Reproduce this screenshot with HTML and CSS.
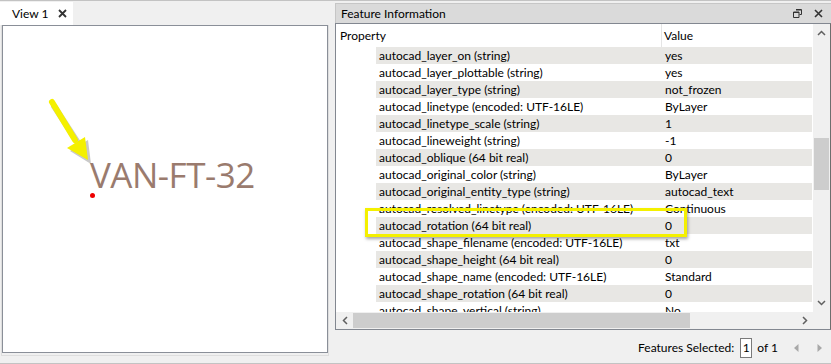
FILE: index.html
```html
<!DOCTYPE html>
<html>
<head>
<meta charset="utf-8">
<link rel="stylesheet" href="styles.css">
</head>
<body>
<div class="screen">
  <div class="app">
    <section class="left">
      <div class="tabs">
        <div class="tab"><span class="tab-label">View 1</span><svg class="tab-close" width="9" height="9" viewBox="0 0 9 9"><path d="M1 1L8 8M8 1L1 8" stroke="#333" stroke-width="1.8"/></svg></div>
      </div>
      <div class="canvas-outer">
        <div class="canvas">
          <span class="label">VAN-FT-32</span>
          <span class="dot"></span>
          <svg class="arrow" width="60" height="80" viewBox="0 0 60 80">
            <g transform="translate(2,2)" fill="#888" opacity="0.45">
              <path d="M10 8L34 45" stroke="#888" stroke-width="6" stroke-linecap="round"/>
              <polygon points="26,53 44,42 47,66"/>
            </g>
            <path d="M10 6L33 44" stroke="#f4f000" stroke-width="6" stroke-linecap="round"/>
            <polygon points="25,52 43,41 46,64" fill="#f4f000"/>
          </svg>
        </div>
      </div>
    </section>
    <section class="right">
      <div class="titlebar">
        <span class="title">Feature Information</span>
        <div class="title-icons">
          <svg width="9" height="9" viewBox="0 0 9 9"><path d="M3 0.5H8.5V5.5H6.5M0.5 3H6V8.5H0.5Z" fill="none" stroke="#333" stroke-width="1"/><path d="M3 1H8" stroke="#333" stroke-width="1"/><path d="M1 3.5H6" stroke="#333" stroke-width="1"/></svg>
          <svg width="9" height="9" viewBox="0 0 9 9"><path d="M1 1L8 8M8 1L1 8" stroke="#333" stroke-width="1.6"/></svg>
        </div>
      </div>
      <div class="tree">
        <div class="tree-main">
          <div class="viewport">
            <div class="header">
              <div class="h-prop">Property</div>
              <div class="h-val">Value</div>
            </div>
            <div class="rows">
              <div class="row alt"><span class="p">autocad_layer_on (string)</span><span class="v">yes</span></div>
              <div class="row"><span class="p">autocad_layer_plottable (string)</span><span class="v">yes</span></div>
              <div class="row alt"><span class="p">autocad_layer_type (string)</span><span class="v">not_frozen</span></div>
              <div class="row"><span class="p">autocad_linetype (encoded: UTF-16LE)</span><span class="v">ByLayer</span></div>
              <div class="row alt"><span class="p">autocad_linetype_scale (string)</span><span class="v">1</span></div>
              <div class="row"><span class="p">autocad_lineweight (string)</span><span class="v">-1</span></div>
              <div class="row alt"><span class="p">autocad_oblique (64 bit real)</span><span class="v">0</span></div>
              <div class="row"><span class="p">autocad_original_color (string)</span><span class="v">ByLayer</span></div>
              <div class="row alt"><span class="p">autocad_original_entity_type (string)</span><span class="v">autocad_text</span></div>
              <div class="row"><span class="p">autocad_resolved_linetype (encoded: UTF-16LE)</span><span class="v">Continuous</span></div>
              <div class="row alt"><span class="p">autocad_rotation (64 bit real)</span><span class="v">0</span></div>
              <div class="row"><span class="p">autocad_shape_filename (encoded: UTF-16LE)</span><span class="v">txt</span></div>
              <div class="row alt"><span class="p">autocad_shape_height (64 bit real)</span><span class="v">0</span></div>
              <div class="row"><span class="p">autocad_shape_name (encoded: UTF-16LE)</span><span class="v">Standard</span></div>
              <div class="row alt"><span class="p">autocad_shape_rotation (64 bit real)</span><span class="v">0</span></div>
              <div class="row"><span class="p">autocad_shape_vertical (string)</span><span class="v">No</span></div>
            </div>
          </div>
          <div class="vscroll">
            <svg class="sarrow" width="9" height="6" viewBox="0 0 9 6"><path d="M1 5L4.5 1.5L8 5" fill="none" stroke="#606060" stroke-width="1.5"/></svg>
            <div class="vtrack-top"></div>
            <div class="vthumb"></div>
            <div class="vtrack-bottom"></div>
            <svg class="sarrow" width="9" height="6" viewBox="0 0 9 6"><path d="M1 1L4.5 4.5L8 1" fill="none" stroke="#606060" stroke-width="1.5"/></svg>
          </div>
        </div>
        <div class="hscroll">
          <svg class="harrow" width="6" height="9" viewBox="0 0 6 9"><path d="M5 1L1.5 4.5L5 8" fill="none" stroke="#606060" stroke-width="1.5"/></svg>
          <div class="hthumb"></div>
          <div class="hrest"></div>
          <svg class="harrow" width="6" height="9" viewBox="0 0 6 9"><path d="M1 1L4.5 4.5L1 8" fill="none" stroke="#606060" stroke-width="1.5"/></svg>
          <div class="corner"></div>
        </div>
      </div>
      <div class="footer">
        <span class="f-label">Features Selected:</span>
        <span class="spin">1</span>
        <span class="f-of">of 1</span>
        <svg class="nav" width="5" height="8" viewBox="0 0 5 8"><polygon points="4.5,0 0,4 4.5,8" fill="#a8a8a8"/></svg>
        <svg class="nav" width="5" height="8" viewBox="0 0 5 8"><polygon points="0.5,0 5,4 0.5,8" fill="#a8a8a8"/></svg>
      </div>
    </section>
  </div>
  <div class="highlight"></div>
</div>
</body>
</html>
```

FILE: styles.css
```css
* { box-sizing: border-box; }
html, body { margin: 0; padding: 0; }
body {
  background: #f0f0f0;
  font-family: "Lato", "Open Sans", sans-serif;
  font-size: 12px;
  color: #000;
}
.screen {
  position: relative;
  width: 831px;
  height: 364px;
  border-top: 1px solid #c3c3c3;
  border-bottom: 1px solid #c3c3c3;
  overflow: hidden;
}
.app {
  display: flex;
  height: 362px;
}
.left {
  width: 330px;
  display: flex;
  flex-direction: column;
  padding-top: 1px;
}
.tabs {
  height: 23px;
  display: flex;
}
.tab {
  width: 73px;
  background: #fff;
  display: flex;
  align-items: center;
  padding-left: 12px;
  gap: 9px;
}
.tab-label { line-height: 1; }
.canvas-outer {
  margin-left: 1px;
  width: 328px;
  height: 331px;
  border: 1px solid #dedede;
  border-top: none;
  padding: 1px 0 0 0;
}
.canvas {
  position: relative;
  width: 326px;
  height: 328px;
  background: #fff;
  border: 1px solid #8a8f98;
  margin-top: -1px;
}
.label {
  position: absolute;
  left: 87px;
  top: 131px;
  font-family: "Open Sans", sans-serif;
  font-size: 35px;
  color: #9a7b6e;
  letter-spacing: -0.5px;
  line-height: 1;
}
.dot {
  position: absolute;
  left: 87px;
  top: 167px;
  width: 5px;
  height: 5px;
  border-radius: 50%;
  background: #ee0000;
}
.arrow {
  position: absolute;
  left: 39px;
  top: 70px;
}
.right {
  flex: 1;
  margin-left: 5px;
  display: flex;
  flex-direction: column;
  padding-top: 2px;
}
.titlebar {
  height: 20px;
  background: #dadada;
  border-top: 1px solid #c6c6c6;
  border-left: 1px solid #c6c6c6;
  display: flex;
  align-items: center;
  padding: 0 8px 0 5px;
}
.title { flex: 1; }
.title-icons {
  display: flex;
  gap: 12px;
  align-items: center;
}
.tree {
  height: 307px;
  border: 1px solid #828790;
  border-right: 1px solid #6e6e6e;
  display: flex;
  flex-direction: column;
  background: #fff;
}
.tree-main {
  flex: 1;
  display: flex;
  min-height: 0;
}
.viewport {
  flex: 1;
  overflow: hidden;
}
.header {
  height: 23px;
  display: flex;
  align-items: center;
}
.h-prop {
  width: 326px;
  padding-left: 4px;
  height: 100%;
  display: flex;
  align-items: center;
  border-right: 1px solid #e5e5e5;
}
.h-val { padding-left: 2px; }
.rows {
  padding-left: 40px;
  padding-right: 1px;
}
.row {
  height: 17px;
  display: flex;
  align-items: center;
  white-space: nowrap;
}
.row.alt { background: #e8e7e4; }
.p {
  width: 286px;
  padding-left: 3px;
  overflow: hidden;
}
.v { padding-left: 3px; }
.vscroll {
  width: 17px;
  background: #f0f0f0;
  display: flex;
  flex-direction: column;
  align-items: center;
}
.sarrow { margin: 6px 0; flex: none; }
.vtrack-top { height: 96px; }
.vthumb {
  width: 15px;
  height: 52px;
  background: #cdcdcd;
}
.vtrack-bottom { flex: 1; }
.hscroll {
  height: 17px;
  background: #f0f0f0;
  display: flex;
  align-items: center;
}
.harrow { margin: 0 5px 0 6px; flex: none; }
.hthumb {
  height: 15px;
  width: 337px;
  background: #cdcdcd;
}
.hrest { flex: 1; }
.corner { width: 17px; height: 17px; background: #f0f0f0; }
.footer {
  flex: 1;
  display: flex;
  align-items: center;
  justify-content: flex-end;
  padding-right: 9px;
  padding-top: 2px;
}
.f-label { margin-right: 6px; }
.spin {
  width: 12px;
  height: 20px;
  border: 1px solid #7a7a7a;
  background: #fff;
  display: flex;
  align-items: center;
  justify-content: center;
  margin-right: 5px;
}
.f-of { margin-right: 16px; }
.nav + .nav { margin-left: 18px; }
.highlight {
  position: absolute;
  left: 365px;
  top: 207px;
  width: 322px;
  height: 29px;
  border: 3px solid #f4f000;
  box-shadow: 1px 2px 3px rgba(0,0,0,0.35);
}
```
